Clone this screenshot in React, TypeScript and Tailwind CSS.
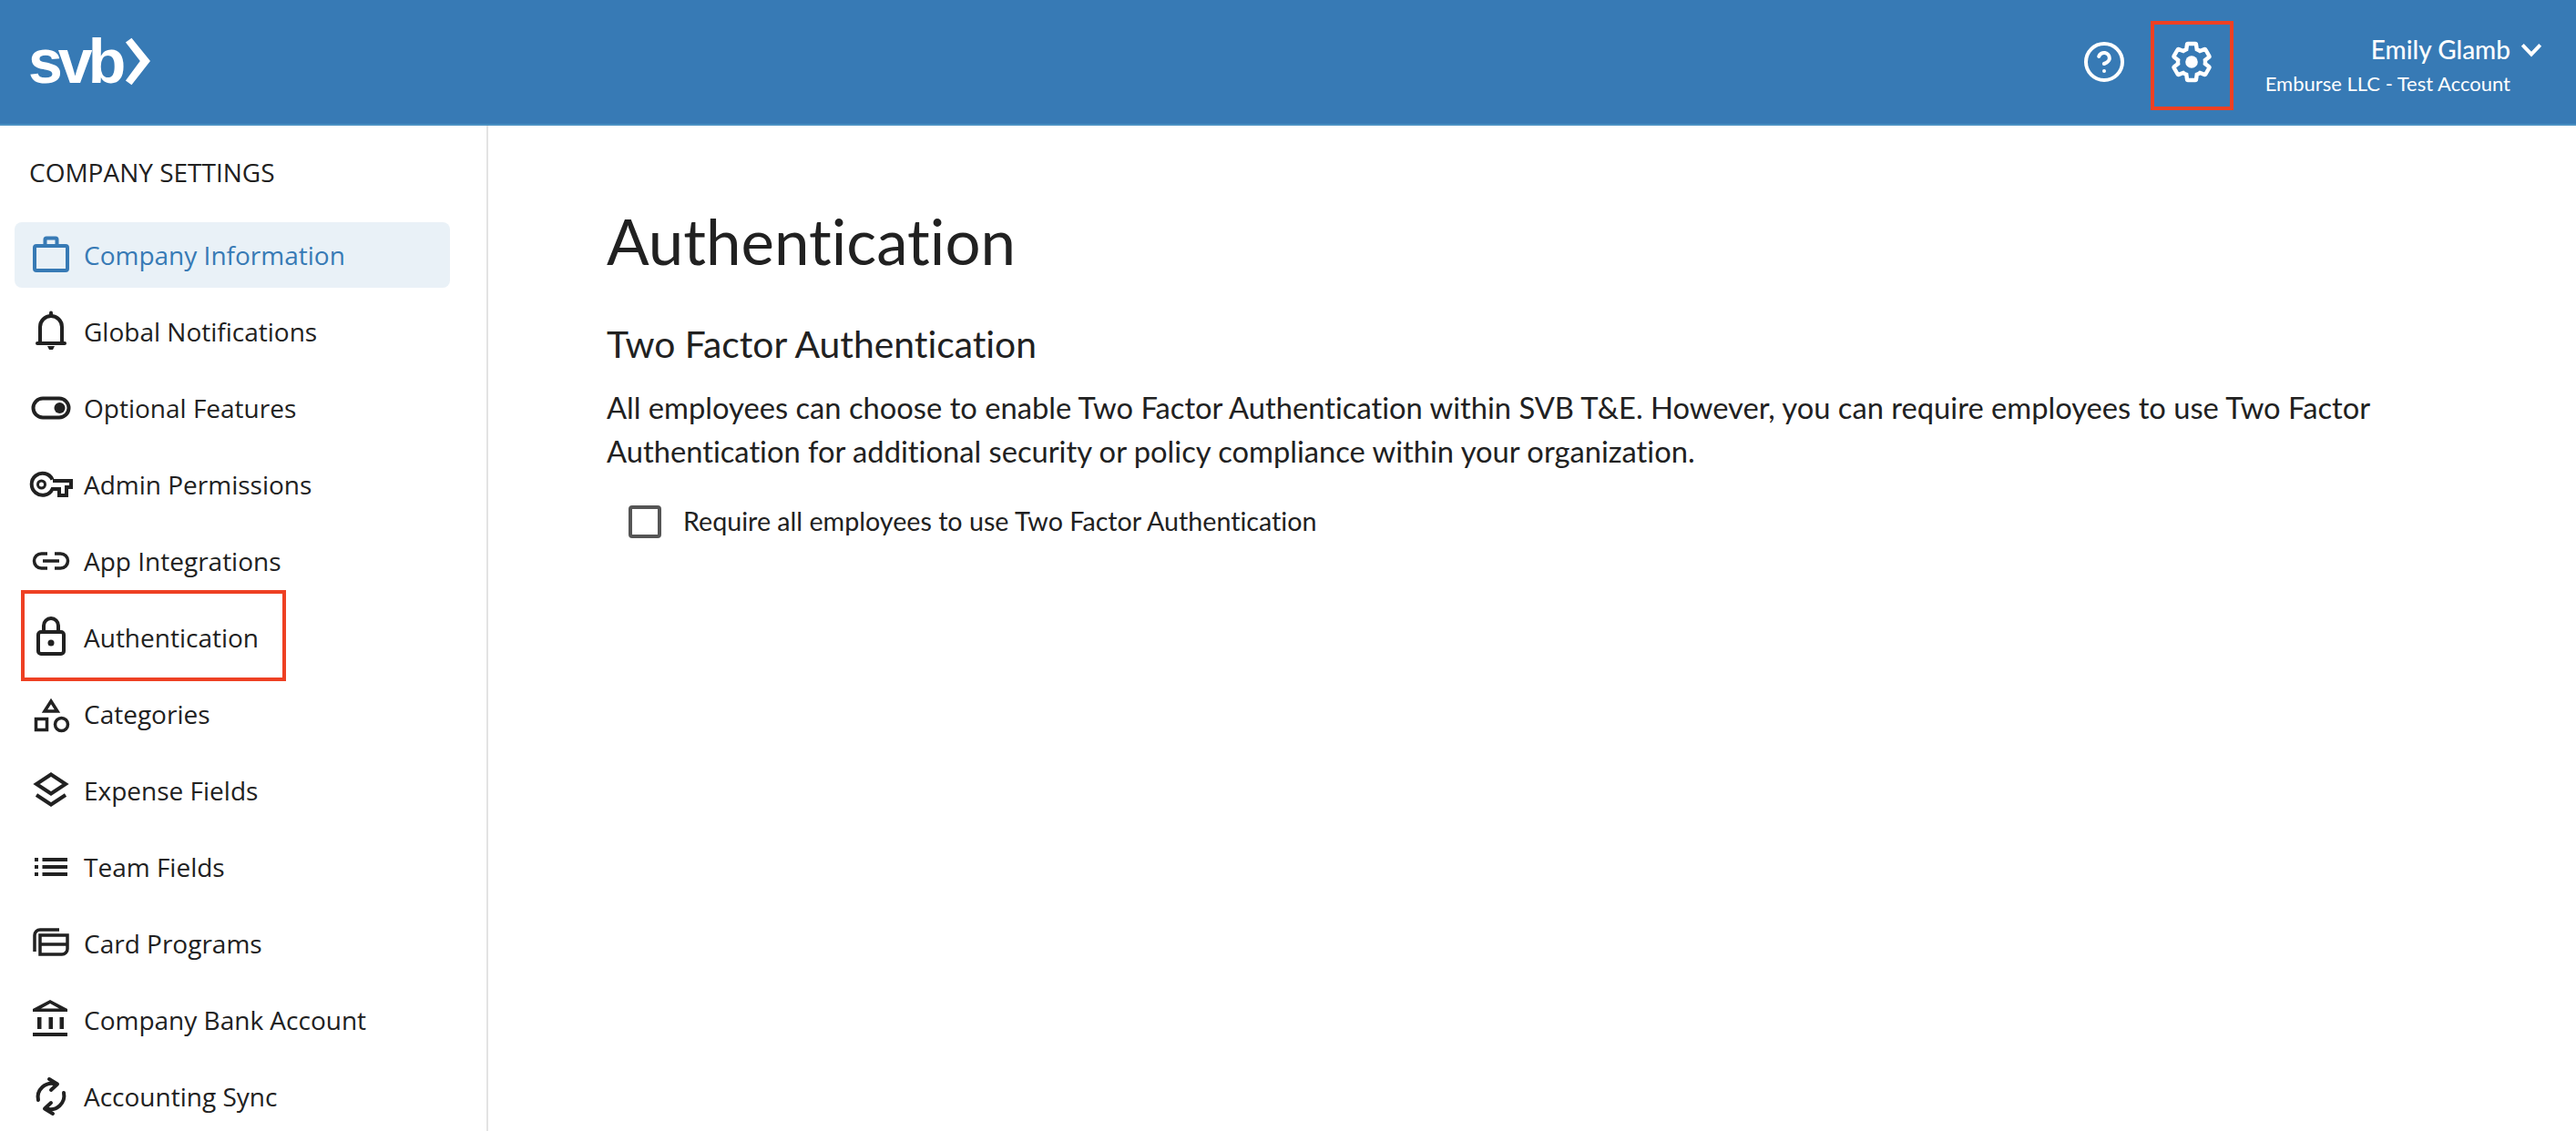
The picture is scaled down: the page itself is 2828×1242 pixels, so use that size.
import React from "react";
import { CircleHelp } from "lucide-react";

const S = { fill: "none", stroke: "currentColor", strokeWidth: 4 } as const;

const icons: Record<string, React.ReactNode> = {
  briefcase: (
    <g {...S}>
      <rect x="6" y="14" width="36" height="27" rx="2" />
      <path d="M17.5 14 V7 a1.5 1.5 0 0 1 1.500-1.500 H29 a1.500 1.500 0 0 1 1.500 1.500 V14" />
    </g>
  ),
  bell: (
    <g {...S}>
      <path d="M12 37 V19 a12 12 0 0 1 24 0 V37" />
      <path d="M9 37 H39" strokeLinecap="round" />
      <path d="M24 3.500 V7" strokeLinecap="round" />
      <path d="M20 40 H28 L26 44 H22 Z" fill="currentColor" stroke="none" />
    </g>
  ),
  toggle: (
    <g {...S}>
      <rect x="4.500" y="13.500" width="39" height="21" rx="10.500" />
      <circle cx="33.500" cy="24" r="6" fill="currentColor" stroke="none" />
    </g>
  ),
  key: (
    <g {...S}>
      <path d="M25.500 18.500 A12 12 0 1 0 25.500 29 H33 V36 H41 V27 H46 V20 H26" />
      <circle cx="13.500" cy="24" r="4" strokeWidth="3" />
    </g>
  ),
  link: (
    <g {...S} strokeWidth="3.500">
      <path d="M20 16 H13.500 a8 8 0 0 0 0 16 H20" />
      <path d="M28 16 H34.500 a8 8 0 0 1 0 16 H28" />
      <path d="M15 24 H33" />
    </g>
  ),
  lock: (
    <g {...S}>
      <rect x="10" y="18" width="28" height="24" rx="3" />
      <path d="M16 18 V11 a8 8 0 0 1 16 0 V18" />
      <circle cx="24" cy="30" r="3.500" fill="currentColor" stroke="none" />
    </g>
  ),
  shapes: (
    <g {...S} strokeWidth="3.500">
      <path d="M24 10 L31 21 H17 Z" />
      <rect x="7.500" y="29.500" width="12" height="12" />
      <circle cx="35.500" cy="35.500" r="7" />
    </g>
  ),
  layers: (
    <g {...S}>
      <path d="M24 6.500 L40 17 L24 27.500 L8 17 Z" />
      <path d="M8 29 L24 39.500 L40 29" />
    </g>
  ),
  list: (
    <g fill="currentColor">
      <rect x="6" y="14" width="4" height="4" />
      <rect x="6" y="22" width="4" height="4" />
      <rect x="6" y="30" width="4" height="4" />
      <rect x="14.500" y="14" width="27.500" height="4" />
      <rect x="14.500" y="22" width="27.500" height="4" />
      <rect x="14.500" y="30" width="27.500" height="4" />
    </g>
  ),
  cards: (
    <g {...S} strokeWidth="3.500">
      <path d="M6 33 V15 a6 6 0 0 1 6 -6 H33" />
      <path d="M12 15 H42 V30 a6 6 0 0 1 -6 6 H12 Z" />
      <path d="M12 25 H42" />
    </g>
  ),
  bank: (
    <g fill="currentColor">
      <path d="M23 2 L42 12 V15 H4 V12 Z M23 6 L13 11.500 H33 Z" fillRule="evenodd" />
      <rect x="9" y="21" width="4.500" height="13" />
      <rect x="21.500" y="21" width="4.500" height="13" />
      <rect x="33.500" y="21" width="4.500" height="13" />
      <rect x="4" y="38" width="38" height="4" />
    </g>
  ),
  sync: (
    <g {...S} strokeLinecap="round" strokeLinejoin="round">
      <path d="M10 28 A15 15 0 0 1 29 10.500" />
      <path d="M22 5 L31 10.500 L24 17" />
      <path d="M38 20 A15 15 0 0 1 19 37.500" />
      <path d="M26 43 L17 37.500 L24 31" />
    </g>
  ),
};

const items = [
  ["briefcase", "Company Information"],
  ["bell", "Global Notifications"],
  ["toggle", "Optional Features"],
  ["key", "Admin Permissions"],
  ["link", "App Integrations"],
  ["lock", "Authentication"],
  ["shapes", "Categories"],
  ["layers", "Expense Fields"],
  ["list", "Team Fields"],
  ["cards", "Card Programs"],
  ["bank", "Company Bank Account"],
  ["sync", "Accounting Sync"],
];

function Icon({ name }: { name: string }) {
  return (
    <svg viewBox="0 0 48 48" className="w-12 h-12 shrink-0">
      {icons[name]}
    </svg>
  );
}

function NavItem({ icon, label, active }: { icon: string; label: string; active: boolean }) {
  return (
    <div
      className={
        active
          ? "relative flex items-center h-[72px] w-[478px] pl-4 gap-3 rounded-lg bg-[#e9f1f7] text-[#377ab5]"
          : "relative flex items-center h-[72px] w-[478px] pl-4 gap-3 text-[#212121]"
      }
    >
      <Icon name={icon} />
      <span className="text-[28px] leading-none whitespace-nowrap">{label}</span>
      {label === "Authentication" && (
        <div className="absolute left-[7px] top-[-16px] w-[291px] h-[100px] border-4 border-[#ee4023]" />
      )}
    </div>
  );
}

export default function App() {
  return (
    <div className="w-[2828px] h-[1242px] overflow-hidden bg-white flex flex-col font-['Lato',sans-serif] text-[#212121] [font-variant-ligatures:none]">
      <header className="h-[138px] shrink-0 bg-[#377ab5] border-b-2 border-[#4a90c2] flex items-center justify-between pl-[31px] pr-[37px] text-white">
        <div className="flex items-center h-full">
          <span className="font-['Liberation_Sans',sans-serif] font-bold text-[68px] leading-none tracking-[-5px] mb-[2px]">svb</span>
          <svg viewBox="0 0 30 56" className="w-[28px] h-[54px] ml-[4px]">
            <path d="M1 5 L8 0 L30 27 L8 55 L1 50 L18 27 Z" fill="white" />
          </svg>
        </div>
        <div className="flex items-center">
          <CircleHelp size={48} strokeWidth={2} />
          <div className="relative ml-[48px] w-12 h-12 flex items-center justify-center">
            <svg viewBox="0 0 24 24" className="w-12 h-12">
              <path
                d="M19.43 12.98c.04-.32.07-.64.07-.98 0-.34-.03-.66-.07-.98l2.110-1.650c.19-.15.24-.42.12-.64l-2-3.460c-.12-.22-.39-.3-.61-.22l-2.490 1c-.52-.4-1.080-.73-1.690-.98l-.38-2.650C14.460 2.180 14.250 2 14 2h-4c-.25 0-.46.18-.49.42l-.38 2.650c-.61.25-1.170.59-1.690.98l-2.490-1c-.23-.09-.49 0-.61.22l-2 3.460c-.13.22-.07.49.12.64l2.110 1.650c-.04.32-.07.65-.07.98 0 .33.03.66.07.98l-2.110 1.650c-.19.15-.24.42-.12.64l2 3.460c.12.22.39.3.61.22l2.490-1c.52.4 1.080.73 1.690.98l.38 2.650c.03.24.24.42.49.42h4c.25 0 .46-.18.49-.42l.38-2.650c.61-.25 1.170-.59 1.690-.98l2.490 1c.23.09.49 0 .61-.22l2-3.460c.12-.22.07-.49-.12-.64l-2.110-1.650z"
                fill="none"
                stroke="white"
                strokeWidth="2.200"
              />
              <circle cx="12" cy="12" r="3.400" fill="white" />
            </svg>
            <div className="absolute left-[-21px] top-[-21px] w-[91px] h-[98px] border-4 border-[#ee4023]" />
          </div>
          <div className="ml-[57px] pt-[6px] flex flex-col items-end">
            <div className="flex items-center">
              <span className="text-[28px] leading-[34px] font-medium">Emily Glamb</span>
              <svg viewBox="0 0 21 14" className="w-[24px] h-[16px] ml-[11px] mt-[2px]">
                <path d="M2 2 L10.500 11 L19 2" fill="none" stroke="white" strokeWidth="3.500" />
              </svg>
            </div>
            <span className="text-[22px] leading-[28px] mt-[7px] mr-[35px]">Emburse LLC - Test Account</span>
          </div>
        </div>
      </header>
      <div className="flex flex-1 min-h-0">
        <aside className="w-[536px] shrink-0 border-r-2 border-[#e3e3e3] pl-4 font-['Open_Sans',sans-serif]">
          <div className="pl-4 pt-[33px] h-[106px] text-[28px] leading-9 text-[#212121]">COMPANY SETTINGS</div>
          <nav className="flex flex-col gap-3">
            {items.map(([icon, label], i) => (
              <NavItem key={label} icon={icon} label={label} active={i === 0} />
            ))}
          </nav>
        </aside>
        <main className="flex-1 pl-[130px] pt-[84px]">
          <h1 className="text-[69px] leading-[86px] font-normal">Authentication</h1>
          <h2 className="mt-[46px] text-[40.8px] leading-[48px] font-normal">Two Factor Authentication</h2>
          <p className="mt-[22px] text-[32.7px] leading-[48px] w-[2000px]">
            All employees can choose to enable Two Factor Authentication within SVB T&amp;E. However, you can require employees to use Two Factor
            <br />
            Authentication for additional security or policy compliance within your organization.
          </p>
          <label className="mt-[34px] ml-[24px] flex items-center gap-[24px]">
            <span className="w-9 h-9 border-4 border-[#555555] rounded-[4px] bg-white" />
            <span className="text-[28.67px] leading-9 mb-[2px]">Require all employees to use Two Factor Authentication</span>
          </label>
        </main>
      </div>
    </div>
  );
}
